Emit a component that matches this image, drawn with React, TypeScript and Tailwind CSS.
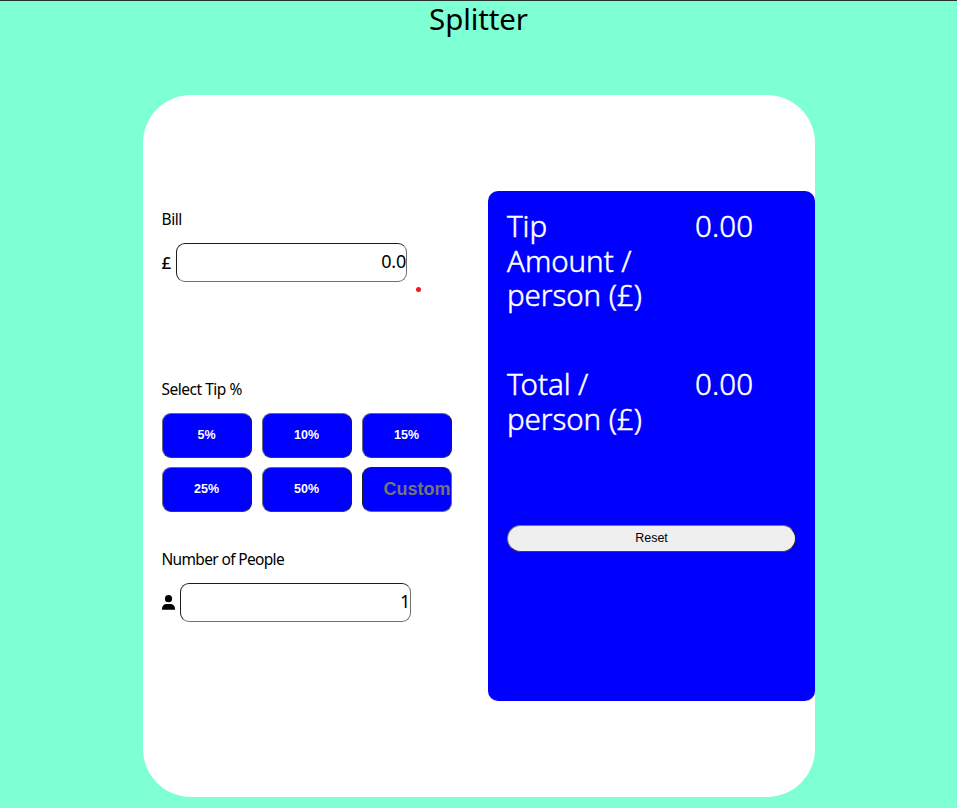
import React from "react";

const tips = ["5%", "10%", "15%", "25%", "50%"];

const field =
  "h-[39px] w-[231.5px] rounded-[9px] border border-t-[#1c1c1c] border-l-[#1c1c1c] border-r-[#6f6f6f] border-b-[#6f6f6f] bg-white pb-[3px] text-right text-[18px] tracking-[-0.2px] outline-none";

function Label({ children, className }: { children: React.ReactNode; className: string }) {
  return (
    <div className="flex h-[18px] items-center">
      <span className={`whitespace-nowrap text-[15.5px] leading-[18px] ${className}`}>{children}</span>
    </div>
  );
}

function PersonIcon() {
  return (
    <svg viewBox="0 0 13 15" className="mr-[5px] h-[15px] w-[13px] shrink-0">
      <circle cx="6.5" cy="3.7" r="3.6" />
      <path d="M0 14.8v-1C0 10.8 2 9 4.8 9h3.4C11 9 13 10.8 13 13.8v1z" />
    </svg>
  );
}

function Result({ label, className }: { label: string; className: string }) {
  return (
    <div className={`flex text-[29.5px] font-light leading-[34.5px] [-webkit-text-stroke:0.5px_white] ${className}`}>
      <p className="mr-[48px] w-[140px] pl-[0.5px] tracking-[-0.05px]">{label}</p>
      <p className="pl-[0.5px] tracking-[0.1px]">0.00</p>
    </div>
  );
}

export default function App() {
  return (
    <div className="flex h-[808px] w-full flex-col items-center overflow-hidden border-t border-[#26332f] bg-[#7fffd4] font-['Noto_Sans',sans-serif] text-black">
      <h1 className="h-[94px] text-[29.5px] leading-[35px] tracking-[-0.1px]">Splitter</h1>
      <main className="flex h-[702px] w-[672px] shrink-0 items-center rounded-[48px] bg-white">
        <section className="h-[510px] w-[345px] pt-[19px] pl-[19px]">
          <div className="h-[170px]">
            <Label className="tracking-[-0.4px]">Bill</Label>
            <div className="mt-[15px] flex items-center">
              <span className="w-[14px] text-[17px] font-medium">£</span>
              <input className={field} defaultValue="0.0" />
            </div>
            <div className="mt-[5px] ml-[254px] h-[5px] w-[5px] rounded-full bg-[#ed1c24]" />
          </div>
          <div className="h-[170px]">
            <Label className="tracking-[-0.48px]">Select Tip %</Label>
            <div className="mt-[15px] grid w-[290px] grid-cols-3 gap-x-[10px] gap-y-[9px] font-['Liberation_Sans',Arial,sans-serif] font-bold">
              {tips.map((tip) => (
                <button
                  key={tip}
                  className="h-[45px] rounded-[9px] border border-t-[#6b6b78] border-l-[#6b6b78] border-r-[#202028] border-b-[#3c3c50] bg-[#0000ff] text-[12.5px] text-white"
                >
                  {tip}
                </button>
              ))}
              <input
                placeholder="Custom"
                className="h-[45px] w-full min-w-0 rounded-[9px] border border-t-[#202028] border-l-[#202028] border-r-[#6b6b78] border-b-[#6b6b78] bg-[#0000ff] text-right text-[18px] outline-none placeholder:text-[#757575]"
              />
            </div>
          </div>
          <div>
            <Label className="tracking-[-0.66px]">Number of People</Label>
            <div className="mt-[15px] flex items-center">
              <PersonIcon />
              <input className={field} defaultValue="1" />
            </div>
          </div>
        </section>
        <section className="h-[510px] w-[327px] rounded-[10px] bg-[#0000ff] pt-[18px] pl-[19px] text-white">
          <Result className="h-[158px]" label="Tip Amount / person (£)" />
          <Result className="h-[158px]" label="Total / person (£)" />
          <button className="block h-[27px] w-[289px] rounded-full border border-t-[#767676] border-l-[#767676] border-r-[#202020] border-b-[#404040] bg-[#efefef] pl-px font-['Liberation_Sans',Arial,sans-serif] text-[12.5px] leading-none text-black">
            Reset
          </button>
        </section>
      </main>
    </div>
  );
}
